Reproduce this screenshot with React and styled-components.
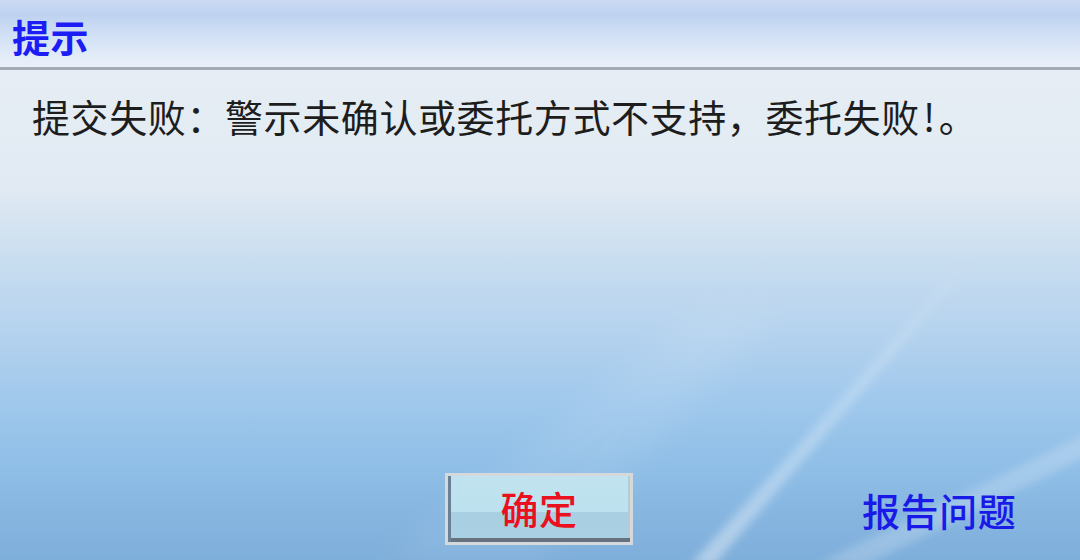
import React from 'react'
import styled, { createGlobalStyle } from 'styled-components'

const GlobalStyle = createGlobalStyle`
  html, body {
    margin: 0;
    padding: 0;
  }
  body {
    width: 1080px;
    height: 560px;
    overflow: hidden;
    font-family: "Noto Sans CJK SC", "Noto Sans", sans-serif;
  }
`

const Dialog = styled.div`
  width: 1080px;
  height: 560px;
  display: flex;
  flex-direction: column;
  overflow: hidden;
`

const TitleBar = styled.div`
  height: 70px;
  box-sizing: border-box;
  padding: 4px 0 0 12px;
  display: flex;
  align-items: center;
  background: linear-gradient(
    to bottom,
    #cbdaf2 0%,
    #bed2f0 22%,
    #d3e1f5 55%,
    #ebf1fa 100%
  );
  border-bottom: 3px solid #a3acb6;
`

const Title = styled.h1`
  margin: 0;
  font-size: 38px;
  font-weight: 700;
  letter-spacing: 0.6px;
  color: #1c1cf4;
  line-height: 1;
`

const Body = styled.div`
  position: relative;
  flex: 1;
  display: flex;
  flex-direction: column;
  background: linear-gradient(
    to bottom,
    #e6edf4 0%,
    #e1eaf3 24%,
    #cadef0 38%,
    #b4d2ee 54%,
    #9fc8ec 68%,
    #8ebde6 82%,
    #7eaeda 100%
  );
`

const Streaks = styled.svg`
  position: absolute;
  inset: 0;
  width: 100%;
  height: 100%;
  pointer-events: none;
`

const Message = styled.p`
  position: relative;
  margin: 0;
  padding: 23px 0 0 32px;
  font-size: 38px;
  line-height: 46px;
  letter-spacing: 0.6px;
  color: #1d1d1d;
`

const Bang = styled.span`
  display: inline-block;
  width: 19px;
  text-align: center;
`

const Footer = styled.div`
  position: relative;
  margin-top: auto;
  display: flex;
  align-items: center;
  padding: 0 0 15px 445px;
`

const OkButton = styled.button`
  width: 188px;
  height: 72px;
  box-sizing: border-box;
  padding: 0 0 4px;
  border: 3px solid #d5d9db;
  background: linear-gradient(to bottom, #c0e3ef 0%, #bde1ee 55%, #a8cfe2 55%, #a9d0e3 100%);
  box-shadow: inset 3px 0 0 #6a8094, inset 0 -4px 0 #66737e, inset -2px 0 0 #b7cbd4;
  font-family: "Noto Sans CJK SC", sans-serif;
  font-size: 38px;
  font-weight: 500;
  letter-spacing: 0.6px;
  color: #ea1020;
  cursor: pointer;
`

const ReportLink = styled.a`
  margin-left: 229px;
  font-size: 38px;
  font-weight: 500;
  letter-spacing: 0.6px;
  color: #1a1ae8;
  text-decoration: none;
  cursor: pointer;
`

const App = () => (
  <Dialog>
    <GlobalStyle />
    <TitleBar>
      <Title>提示</Title>
    </TitleBar>
    <Body>
      <Streaks viewBox="0 0 1080 490" preserveAspectRatio="none">
        <defs>
          <linearGradient id="fade" x1="0" y1="1" x2="0" y2="0">
            <stop offset="0" stopColor="#ffffff" stopOpacity="0.4" />
            <stop offset="0.7" stopColor="#ffffff" stopOpacity="0.18" />
            <stop offset="1" stopColor="#ffffff" stopOpacity="0" />
          </linearGradient>
          <filter id="soft" x="-10%" y="-10%" width="120%" height="120%">
            <feGaussianBlur stdDeviation="4" />
          </filter>
          <filter id="wide" x="-20%" y="-20%" width="140%" height="140%">
            <feGaussianBlur stdDeviation="14" />
          </filter>
        </defs>
        <path d="M690 495 L714 495 L975 190 L966 190 Z" fill="url(#fade)" filter="url(#soft)" />
        <path d="M815 495 L865 495 L1090 385 L1090 362 Z" fill="#ffffff" opacity="0.2" filter="url(#soft)" />
        <path d="M380 495 L540 495 L780 240 L700 240 Z" fill="#ffffff" opacity="0.07" filter="url(#wide)" />
      </Streaks>
      <Message>
        提交失败：警示未确认或委托方式不支持，委托失败<Bang>!</Bang>。
      </Message>
      <Footer>
        <OkButton>确定</OkButton>
        <ReportLink>报告问题</ReportLink>
      </Footer>
    </Body>
  </Dialog>
)

export default App
